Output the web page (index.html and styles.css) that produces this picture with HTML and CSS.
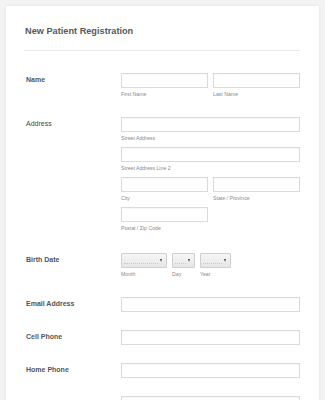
FILE: index.html
```html
<!DOCTYPE html>
<html lang="en">
<head>
  <meta charset="UTF-8">
  <title>New Patient Registration</title>
  <link rel="stylesheet" href="styles.css">
</head>
<body>
  <div class="form-card">
    <div class="form-header">
      <h2>New Patient Registration</h2>
    </div>

    <div class="form-rows">
      <div class="row">
        <label class="row-label">Name</label>
        <div class="row-fields">
          <div class="pair">
            <div class="sub"><input type="text"><span>First Name</span></div>
            <div class="sub"><input type="text"><span>Last Name</span></div>
          </div>
        </div>
      </div>

      <div class="row row-address">
        <label class="row-label label-light">Address</label>
        <div class="row-fields stack">
          <div class="sub"><input type="text"><span>Street Address</span></div>
          <div class="sub"><input type="text"><span>Street Address Line 2</span></div>
          <div class="pair">
            <div class="sub"><input type="text"><span>City</span></div>
            <div class="sub"><input type="text"><span>State / Province</span></div>
          </div>
          <div class="pair">
            <div class="sub"><input type="text"><span>Postal / Zip Code</span></div>
          </div>
        </div>
      </div>

      <div class="row">
        <label class="row-label">Birth Date</label>
        <div class="row-fields">
          <div class="dates">
            <div class="sub"><div class="select month"></div><span>Month</span></div>
            <div class="sub"><div class="select day"></div><span>Day</span></div>
            <div class="sub"><div class="select year"></div><span>Year</span></div>
          </div>
        </div>
      </div>

      <div class="row">
        <label class="row-label">Email Address</label>
        <div class="row-fields"><input type="text"></div>
      </div>

      <div class="row">
        <label class="row-label">Cell Phone</label>
        <div class="row-fields"><input type="text"></div>
      </div>

      <div class="row">
        <label class="row-label">Home Phone</label>
        <div class="row-fields"><input type="text"></div>
      </div>

      <div class="row">
        <label class="row-label">Work Phone</label>
        <div class="row-fields"><input type="text"></div>
      </div>
    </div>
  </div>
</body>
</html>
```

FILE: styles.css
```css
* {
  box-sizing: border-box;
}

body {
  margin: 0;
  padding: 6px 6px 20px;
  background: #f3f3f3;
  font-family: 'Liberation Sans', Arial, sans-serif;
  color: #555;
}

.form-card {
  background: #fff;
  box-shadow: 0 0 3px rgba(0,0,0,0.08);
  padding: 20px 19px 30px 18px;
}

.form-header {
  border-bottom: 1px solid #e8e8e8;
  padding-bottom: 13px;
}

.form-header h2 {
  margin: 0;
  font-size: 9.2px;
  line-height: 11px;
  font-weight: bold;
  color: #595959;
  padding-left: 1px;
}

.form-rows {
  display: flex;
  flex-direction: column;
  gap: 18px;
  padding-top: 22px;
}

.row {
  display: flex;
}

.row-address {
  padding-bottom: 2px;
}

.row-label {
  width: 97px;
  flex-shrink: 0;
  padding: 2px 0 0 2px;
  font-size: 7px;
  line-height: 9px;
  font-weight: bold;
  color: #555;
}

.label-light {
  font-weight: normal;
  color: #444;
}

.row-fields {
  width: 179px;
}

.stack {
  display: flex;
  flex-direction: column;
  gap: 4px;
}

.pair {
  display: grid;
  grid-template-columns: 87px 87px;
  gap: 5px;
}

.sub {
  display: flex;
  flex-direction: column;
}

.sub span {
  font-size: 5.2px;
  line-height: 12px;
  height: 11px;
  color: #8a8a8a;
}

input {
  display: block;
  width: 100%;
  height: 15px;
  margin: 0;
  padding: 0 3px;
  border: 1px solid #dadada;
  background: #fff;
  box-shadow: inset 0 1px 1px rgba(0,0,0,0.03);
  outline: none;
}

.dates {
  display: flex;
  gap: 5px;
}

.select {
  position: relative;
  height: 15px;
  border: 1px solid #cfcfcf;
  border-radius: 1px;
  background: linear-gradient(#f6f6f6, #e6e6e6);
}

.select::before {
  content: "";
  position: absolute;
  left: 2px;
  right: 8px;
  bottom: 3px;
  border-bottom: 1px dotted #cacaca;
}

.select::after {
  content: "";
  position: absolute;
  right: 4px;
  top: 5px;
  border-left: 1.5px solid transparent;
  border-right: 1.5px solid transparent;
  border-top: 3px solid #444;
}

.month {
  width: 46px;
}

.day {
  width: 23px;
}

.year {
  width: 31px;
}
```
